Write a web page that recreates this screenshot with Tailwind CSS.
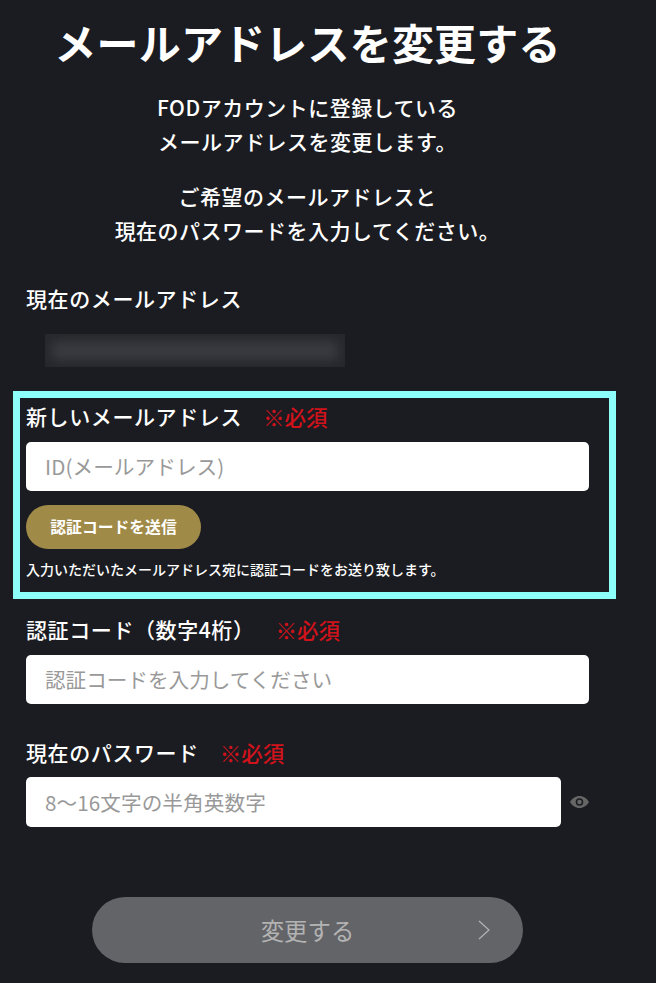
<!DOCTYPE html>
<html lang="ja">

<head>
  <meta charset="UTF-8">
  <meta name="viewport" content="width=device-width, initial-scale=1.0">
  <title>メールアドレスを変更する</title>
  <script src="https://cdn.jsdelivr.net/npm/@tailwindcss/browser@4"></script>
</head>

<body class="bg-[#1b1c21] h-[983px] overflow-hidden font-['Noto_Sans_CJK_JP','Noto_Sans',sans-serif] text-white">
  <div class="w-[615px] flex flex-col">

    <!-- Title -->
    <h1 class="mt-[11px] h-[62px] leading-[62px] text-center text-[42px] font-bold tracking-[0.2px]">メールアドレスを変更する</h1>

    <!-- Intro -->
    <div class="mt-[18px] text-center text-[21px] leading-[33.500px] font-medium tracking-[0.5px]">
      <p>FODアカウントに登録している<br>メールアドレスを変更します。</p>
      <p class="mt-[22px]">ご希望のメールアドレスと<br>現在のパスワードを入力してください。</p>
    </div>

    <!-- Current address -->
    <p class="mt-[34px] ml-[26px] text-[21px] leading-[34px] font-medium tracking-[0.6px]">現在のメールアドレス</p>
    <div class="mt-[19px] ml-[45px] w-[300px] h-[33px] bg-[#25272b] overflow-hidden p-[7px]">
      <div class="h-full bg-[#3a3b40] blur-[6px]"></div>
    </div>

    <!-- New address (highlighted) -->
    <div class="mt-[24px] ml-[13px] w-[603px] h-[208px] border-[7px] border-[#8cfffb] px-[6px] pt-[2px]">
      <div class="flex items-center h-[34px] text-[21px] font-medium">
        <span class="tracking-[0.6px]">新しいメールアドレス</span>
        <span class="ml-[21px] text-[21.500px] text-[#d0121b]">※必須</span>
      </div>
      <div class="mt-[8px] w-[563px] h-[49px] bg-white rounded-[5px] pl-[19px] flex items-center text-[20.600px] tracking-[0.100px] text-[#999999]">ID(メールアドレス)</div>
      <button class="mt-[14px] w-[175px] h-[44px] rounded-full bg-[#a08a47] text-[15.800px] font-bold block">認証コードを送信</button>
      <p class="mt-[8px] text-[14px] leading-[24px] font-medium">入力いただいたメールアドレス宛に認証コードをお送り致します。</p>
    </div>

    <!-- Code -->
    <div class="mt-[14px] ml-[26px] flex items-center h-[34px] text-[21px] font-medium">
      <span class="tracking-[0.6px]">認証コード（数字4桁）</span>
      <span class="ml-[21px] text-[21.500px] text-[#d0121b]">※必須</span>
    </div>
    <div class="mt-[8px] ml-[26px] w-[563px] h-[49px] bg-white rounded-[5px] pl-[19px] flex items-center text-[20.600px] text-[#999999]">認証コードを入力してください</div>

    <!-- Password -->
    <div class="mt-[32px] ml-[26px] flex items-center h-[34px] text-[21px] font-medium">
      <span class="tracking-[0.6px]">現在のパスワード</span>
      <span class="ml-[21px] text-[21.500px] text-[#d0121b]">※必須</span>
    </div>
    <div class="mt-[7px] ml-[26px] flex items-center">
      <div class="w-[535px] h-[50px] bg-white rounded-[5px] pl-[19px] flex items-center text-[20.600px] tracking-[0.100px] text-[#999999]">8〜16文字の半角英数字</div>
      <svg class="ml-[8px] w-[21px] h-[14px]" viewBox="0 0 20 14" fill="#666666">
        <path fill-rule="evenodd" d="M10 1c4 0 7.500 2.500 9.500 6-2 3.500-5.500 6-9.500 6S2.500 10.500.5 7C2.500 3.500 6 1 10 1zm0 2.200a3.800 3.800 0 1 0 0 7.600 3.800 3.800 0 0 0 0-7.600zm0 1.500a2.300 2.300 0 1 1 0 4.600 2.300 2.300 0 0 1 0-4.600z" />
      </svg>
    </div>

    <!-- Submit -->
    <button class="relative mt-[70px] ml-[92px] w-[431px] h-[66px] pt-[2px] rounded-full bg-[#636468] text-[23.400px] text-[#b3b3b3]">
      変更する
      <svg class="absolute right-[32px] top-[23px] w-[14px] h-[20px]" viewBox="0 0 14 20" fill="none" stroke="#b3b3b3" stroke-width="1.200">
        <path d="M2 1l10 9-10 9" />
      </svg>
    </button>
  </div>
</body>

</html>
